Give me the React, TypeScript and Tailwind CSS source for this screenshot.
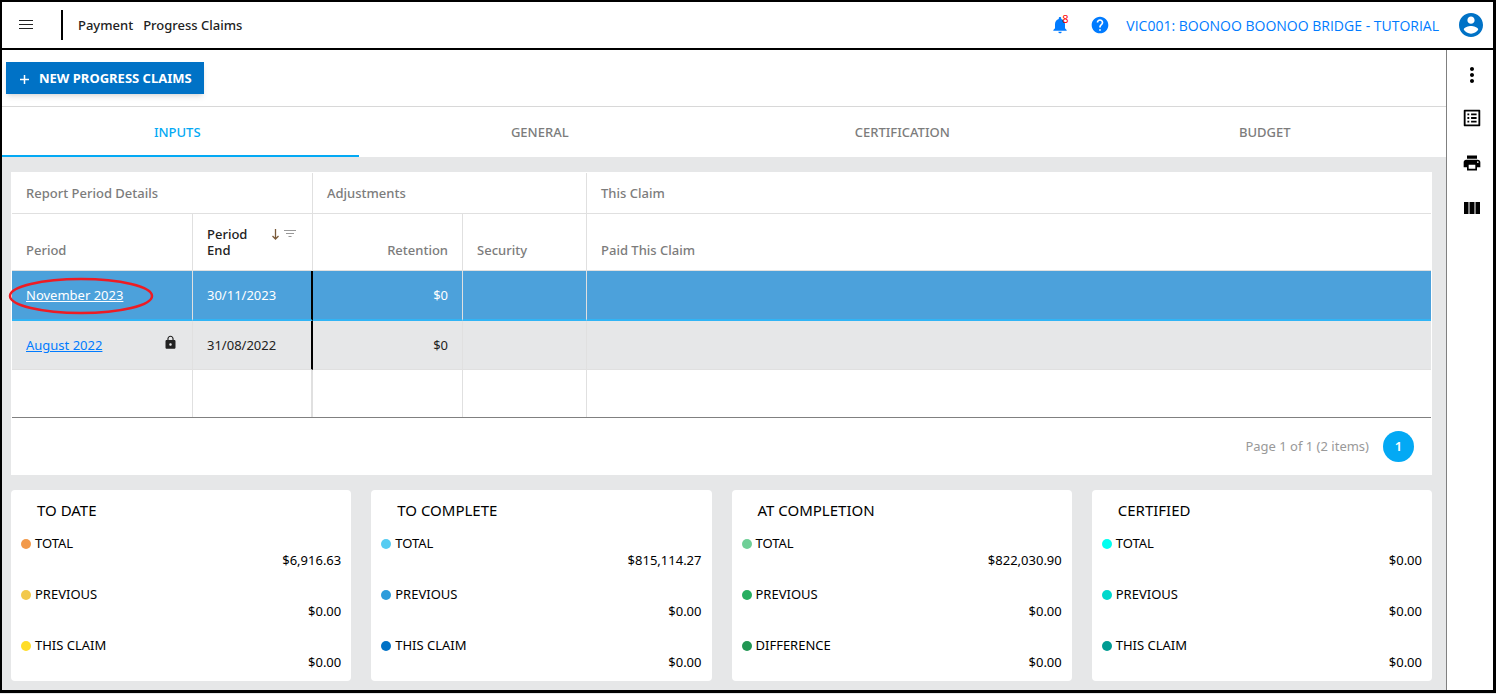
import { useState } from "react";
import clsx from "clsx";
import {
  MdHelp,
  MdListAlt,
  MdLock,
  MdMoreVert,
  MdNotifications,
  MdPrint,
} from "react-icons/md";

const tabs = ["INPUTS", "GENERAL", "CERTIFICATION", "BUDGET"];

const claims = [
  { period: "November 2023", end: "30/11/2023", retention: "$0", locked: false },
  { period: "August 2022", end: "31/08/2022", retention: "$0", locked: true },
];

const summaries = [
  {
    title: "TO DATE",
    rows: [
      { label: "TOTAL", value: "$6,916.63", dot: "bg-[#f2994a]" },
      { label: "PREVIOUS", value: "$0.00", dot: "bg-[#f2c94c]" },
      { label: "THIS CLAIM", value: "$0.00", dot: "bg-[#ffdd26]" },
    ],
  },
  {
    title: "TO COMPLETE",
    rows: [
      { label: "TOTAL", value: "$815,114.27", dot: "bg-[#56ccf2]" },
      { label: "PREVIOUS", value: "$0.00", dot: "bg-[#2d9cdb]" },
      { label: "THIS CLAIM", value: "$0.00", dot: "bg-[#0072c6]" },
    ],
  },
  {
    title: "AT COMPLETION",
    rows: [
      { label: "TOTAL", value: "$822,030.90", dot: "bg-[#6fcf97]" },
      { label: "PREVIOUS", value: "$0.00", dot: "bg-[#27ae60]" },
      { label: "DIFFERENCE", value: "$0.00", dot: "bg-[#219653]" },
    ],
  },
  {
    title: "CERTIFIED",
    rows: [
      { label: "TOTAL", value: "$0.00", dot: "bg-[#00fff0]" },
      { label: "PREVIOUS", value: "$0.00", dot: "bg-[#00d8cc]" },
      { label: "THIS CLAIM", value: "$0.00", dot: "bg-[#009b92]" },
    ],
  },
];

function Header() {
  return (
    <header className="flex h-12 items-center border-b-2 border-black bg-white pr-2.5">
      <button type="button" aria-label="Menu" className="ml-4 p-px">
        <svg width="14" height="12" viewBox="0 0 14 12" stroke="#222" shapeRendering="crispEdges">
          <path d="M0 1.5h14M0 5.5h14M0 9.5h14" />
        </svg>
      </button>
      <span className="ml-[27px] h-[30px] w-0.5 bg-black" />
      <nav className="ml-[15px] flex gap-2.5 pt-0.5 text-[13px] font-medium text-[#222]">
        <span>Payment</span>
        <span>Progress Claims</span>
      </nav>
      <div className="ml-auto flex items-center text-[#007bff]">
        <button type="button" aria-label="Notifications" className="relative">
          <MdNotifications size={20} />
          <span className="absolute -top-1 left-3 text-[11px] leading-4 text-[#f00]">8</span>
        </button>
        <button type="button" aria-label="Help" className="ml-5">
          <MdHelp size={20} />
        </button>
        <a href="#project" className="ml-4 font-['Open_Sans',sans-serif] text-[14px]">
          VIC001: BOONOO BOONOO BRIDGE - TUTORIAL
        </a>
        <button type="button" aria-label="Account" className="ml-5 text-[#0072c6]">
          <svg width="24" height="24" viewBox="2 2 20 20" fill="currentColor">
            <path d="M12 2C6.48 2 2 6.48 2 12s4.48 10 10 10 10-4.48 10-10S17.52 2 12 2zm0 3c1.66 0 3 1.34 3 3s-1.34 3-3 3-3-1.34-3-3 1.34-3 3-3zm0 14.200c-2.500 0-4.710-1.280-6-3.220.03-1.990 4-3.080 6-3.080 1.990 0 5.970 1.090 6 3.080-1.290 1.940-3.500 3.220-6 3.220z" />
          </svg>
        </button>
      </div>
    </header>
  );
}

function SideBar() {
  return (
    <aside className="flex w-[47px] shrink-0 flex-col items-center gap-[21px] border-l border-[#808080] bg-white pt-[15px] text-black">
      <button type="button" aria-label="More" className="flex h-5 items-center pl-1">
        <MdMoreVert size={24} />
      </button>
      <button type="button" aria-label="List" className="flex h-6 items-center pl-1">
        <MdListAlt size={22} />
      </button>
      <button type="button" aria-label="Print" className="flex h-6 items-center pl-1">
        <MdPrint size={20} />
      </button>
      <button type="button" aria-label="Columns" className="flex h-6 items-center pl-1">
        <svg width="16" height="12" viewBox="0 0 16 12" fill="currentColor">
          <path d="M0 0h4.5v12H0zM5.5 0h5v12h-5zM11.5 0H16v12h-4.500z" />
        </svg>
      </button>
    </aside>
  );
}

function ClaimsTable() {
  return (
    <div className="bg-white px-px pt-px">
      <table className="w-full table-fixed border-separate border-spacing-0 border-b border-[#808080] text-left text-[13px]">
        <colgroup>
          <col className="w-[181px]" />
          <col className="w-[120px]" />
          <col className="w-[150px]" />
          <col className="w-[124px]" />
          <col />
        </colgroup>
        <thead className="leading-4 text-[#7c7c7c] [&_th]:border-b [&_th]:border-[#e0e0e0] [&_th]:px-3.5 [&_th]:font-medium">
          <tr className="h-[41px] [&_th:not(:last-child)]:border-r">
            <th colSpan={2}>Report Period Details</th>
            <th colSpan={2}>Adjustments</th>
            <th>This Claim</th>
          </tr>
          <tr className="h-[57px] align-bottom [&_th]:pb-3 [&_th:not(:last-child)]:border-r">
            <th>Period</th>
            <th className="text-[#222]">
              <div className="flex">
                <span className="w-[63px]">
                  Period
                  <br />
                  End
                </span>
                <svg width="26" height="16" viewBox="0 0 26 16" fill="none">
                  <path d="M5.500 3v10M2.500 10l3 3 3-3" stroke="#7a5a3a" strokeWidth="1.3" />
                  <path d="M14 4.500h12M16 7.500h8M18.500 10.500h3" stroke="#999" />
                </svg>
              </div>
            </th>
            <th className="text-right">Retention</th>
            <th>Security</th>
            <th>Paid This Claim</th>
          </tr>
        </thead>
        <tbody className="[&_td]:border-[#e0e0e0] [&_td]:px-3.5 [&_td]:pt-0.5 [&_td:not(:last-child)]:border-r">
          {claims.map(({ period, end, retention, locked }) => (
            <tr
              key={period}
              className={clsx(
                locked
                  ? "h-[49px] bg-[#e6e7e8] text-[#222] [&_td]:border-b"
                  : "h-[50px] bg-[#4ca1db] text-white [&_td]:border-b-2 [&_td]:border-b-[#30b4f5]"
              )}
            >
              <td className="relative">
                <div className="flex items-center justify-between">
                  <a href="#claim" className={clsx("underline", locked && "text-[#007bff]")}>
                    {period}
                  </a>
                  {locked && <MdLock size={15} className="mb-2" />}
                </div>
                {!locked && (
                  <svg
                    className="pointer-events-none absolute -left-1 top-1.5"
                    width="146"
                    height="38"
                    viewBox="0 0 146 38"
                    fill="none"
                  >
                    <ellipse cx="73" cy="19" rx="71" ry="17" stroke="#ed1c24" strokeWidth="2.5" />
                  </svg>
                )}
              </td>
              <td className="border-r-2! border-r-black!">{end}</td>
              <td className="text-right">{retention}</td>
              <td />
              <td />
            </tr>
          ))}
          <tr className="h-[47px]">
            <td />
            <td className="border-r-2!" />
            <td />
            <td />
            <td />
          </tr>
        </tbody>
      </table>
      <div className="flex h-[57px] items-center justify-end pr-[17px] text-[13px] text-[#999]">
        <span>Page 1 of 1 (2 items)</span>
        <button
          type="button"
          className="ml-3.5 size-[31px] rounded-full bg-[#03a9f4] text-[13px] font-semibold text-white"
        >
          1
        </button>
      </div>
    </div>
  );
}

export default function App() {
  const [active, setActive] = useState("INPUTS");

  return (
    <div className="flex min-h-screen flex-col bg-[#e6e7e8] pb-px font-['Noto_Sans','Open_Sans',sans-serif]">
      <div className="flex flex-1 flex-col border-2 border-r-3 border-b-3 border-black">
        <Header />
        <div className="flex flex-1">
          <main className="min-w-0 flex-1">
            <div className="border-b border-[#d8d8d8] bg-white px-1 py-3">
              <button
                type="button"
                className="flex h-8 items-center gap-2 bg-[#0072c6] px-3 pt-0.5 text-[13px] font-bold text-white shadow-md"
              >
                <svg width="13" height="13" viewBox="0 0 13 13" stroke="#fff" strokeWidth="1.5">
                  <path d="M2 6.500h9M6.500 2v9" />
                </svg>
                NEW PROGRESS CLAIMS
              </button>
            </div>
            <div className="overflow-hidden bg-white">
              <div role="tablist" className="-ml-1.5 grid grid-cols-4">
                {tabs.map((tab) => (
                  <button
                    key={tab}
                    type="button"
                    role="tab"
                    aria-selected={tab === active}
                    onClick={() => setActive(tab)}
                    className={clsx(
                      "h-[50px] border-b-2 pt-1 text-[13px] font-medium",
                      tab === active
                        ? "border-[#03a9f4] text-[#03a9f4]"
                        : "border-transparent text-[#7c7c7c]"
                    )}
                  >
                    {tab}
                  </button>
                ))}
              </div>
            </div>
            <div className="flex flex-col gap-[15px] pt-[15px] pr-3.5 pb-[9px] pl-[9px]">
              <ClaimsTable />
              <div className="grid grid-cols-4 gap-5">
                {summaries.map(({ title, rows }) => (
                  <section key={title} className="rounded bg-white px-2.5 py-2.5">
                    <h2 className="mb-[15px] pl-4 text-[15px] leading-5 text-black">{title}</h2>
                    <dl className="flex flex-col gap-[17px] text-[13px] leading-[17px] text-black">
                      {rows.map(({ label, value, dot }) => (
                        <div key={label}>
                          <dt className="flex items-center gap-1">
                            <span className={clsx("size-2.5 rounded-full", dot)} />
                            {label}
                          </dt>
                          <dd className="text-right">{value}</dd>
                        </div>
                      ))}
                    </dl>
                  </section>
                ))}
              </div>
            </div>
          </main>
          <SideBar />
        </div>
      </div>
    </div>
  );
}
